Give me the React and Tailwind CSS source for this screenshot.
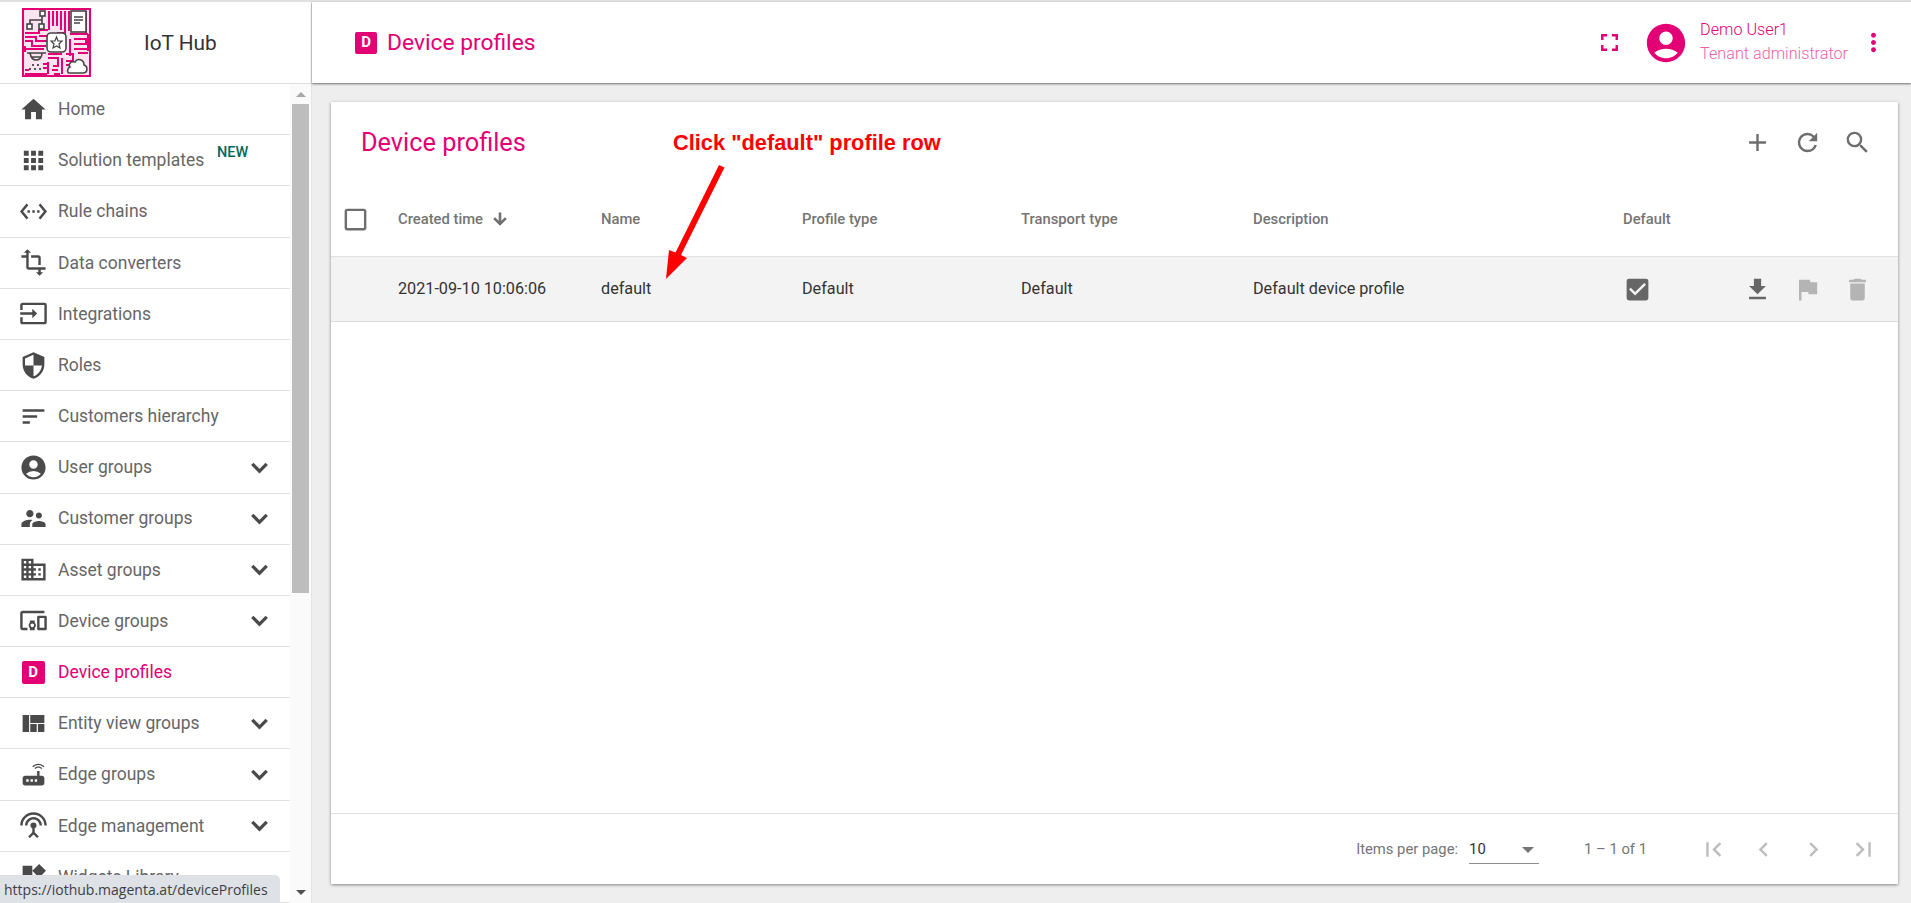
import {
  MdHome, MdApps, MdSettingsEthernet, MdTransform, MdInput, MdSecurity, MdSort, MdAccountCircle,
  MdSupervisorAccount, MdDomain, MdDevicesOther, MdViewQuilt, MdRouter, MdSettingsInputAntenna, MdWidgets,
  MdFullscreen, MdMoreVert, MdAdd, MdRefresh, MdSearch, MdFileDownload, MdFlag, MdDelete,
  MdCheckBox, MdCheckBoxOutlineBlank, MdFirstPage, MdLastPage, MdChevronLeft, MdChevronRight,
} from 'react-icons/md'

const menu = [
  { label: 'Home', icon: MdHome },
  { label: 'Solution templates', icon: MdApps, badge: true },
  { label: 'Rule chains', icon: MdSettingsEthernet },
  { label: 'Data converters', icon: MdTransform },
  { label: 'Integrations', icon: MdInput },
  { label: 'Roles', icon: MdSecurity },
  { label: 'Customers hierarchy', icon: MdSort },
  { label: 'User groups', icon: MdAccountCircle, more: true },
  { label: 'Customer groups', icon: MdSupervisorAccount, more: true },
  { label: 'Asset groups', icon: MdDomain, more: true },
  { label: 'Device groups', icon: MdDevicesOther, more: true },
  { label: 'Device profiles', active: true },
  { label: 'Entity view groups', icon: MdViewQuilt, more: true },
  { label: 'Edge groups', icon: MdRouter, more: true },
  { label: 'Edge management', icon: MdSettingsInputAntenna, more: true },
  { label: 'Widgets Library', icon: MdWidgets },
]

const columns = ['', 'Created time', 'Name', 'Profile type', 'Transport type', 'Description', 'Default']
const rowGrid = 'grid grid-cols-[67px_203px_201px_219px_232px_370px_1fr] items-center'

function Logo() {
  return (
    <svg width="69" height="69" viewBox="0 0 69 69" className="shrink-0">
      <rect width="69" height="69" fill="#fbe3f0" />
      <g fill="none" stroke="#e20074" strokeWidth="2">
        <rect x="1" y="1" width="67" height="67" strokeWidth="2" />
        <path d="M27 3v19M31 3v15M35 3v15M39 3v19M43 3v22h-8M47 3v20" />
        <path d="M3 25h14v-3h9M3 29h11v4h9M3 33h7v5h14M17 28h9v5h-4M3 38v6" />
        <path d="M2 41h20M64 3v22M48 26h18M52 31h12v5H52M52 41h14M56 45h10M48 31v17M66 26v17" />
        <path d="M26 46h14M26 50h10v8h-5M26 54v12M30 62h6M40 50v16M44 46h7v7h-7M44 57h6M32 66h6" />
        <path d="M3 66h22M3 62h4M21 56h4M21 60h4" />
      </g>
      <g fill="#fff" stroke="#444" strokeWidth="1.600">
        <rect x="18" y="3" width="5" height="5" />
        <rect x="5" y="16" width="5" height="5" />
        <rect x="17" y="16" width="5" height="5" />
        <rect x="49" y="3" width="15" height="21" />
        <rect x="25" y="25" width="19" height="19" rx="4" />
        <path d="M47 65h14c5 0 5-7 1-8 0-6-7-7-9-3-5-1-7 3-5 5-3 1-3 6-1 6z" />
      </g>
      <g fill="none" stroke="#444" strokeWidth="1.600">
        <path d="M20 8v4M8 16v-4h12v4" />
        <path d="M52 9h9M52 12h9M52 15h6" />
        <path d="M34.500 29l1.500 4h4l-3 3 1 4-3.500-2-3.500 2 1-4-3-3h4z" strokeWidth="1.200" />
        <path d="M5 45h19M8 45c1 5 3 7 6 7s6-2 6-7M9 49h10" />
      </g>
      <g fill="#555">
        <rect x="10" y="56" width="2" height="2" /><rect x="15" y="56" width="2" height="2" />
        <rect x="7" y="60" width="2" height="2" /><rect x="12" y="60" width="2" height="2" /><rect x="17" y="60" width="2" height="2" />
      </g>
    </svg>
  )
}

function Chevron() {
  return (
    <svg width="29" height="29" viewBox="0 0 24 24" fill="none" stroke="#4a4a4a" strokeWidth="2.700" className="shrink-0">
      <path d="M6 9l6 6 6-6" />
    </svg>
  )
}

function SortArrow() {
  return (
    <svg width="18" height="18" viewBox="0 0 24 24" fill="#6e6e6e" stroke="#6e6e6e" strokeWidth="1.500" className="shrink-0">
      <path d="M20 12l-1.410-1.410L13 16.170V4h-2v12.170l-5.580-5.590L4 12l8 8 8-8z" />
    </svg>
  )
}

function DBadge({ className }) {
  return (
    <span className={`flex items-center justify-center rounded-[2px] bg-[#e20074] font-bold text-white ${className}`}>D</span>
  )
}

function Sidebar() {
  return (
    <aside className="relative flex w-[312px] shrink-0 flex-col border-r border-[#e4e4e4] bg-white">
      <div className="flex h-[82px] shrink-0 items-center border-b border-[#dedede] pl-[22px]">
        <Logo />
        <span className="ml-[53px] pt-[2px] text-[20.800px] text-[#333]">IoT Hub</span>
      </div>
      <div className="flex min-h-0 flex-1">
        <nav className="w-[290px] shrink-0 overflow-hidden">
          {menu.map(item => {
            const Icon = item.icon
            return (
              <div key={item.label} className="relative flex h-[51.2px] items-center border-b border-[#e0e0e0] pl-[18px] pr-[16px]">
                <span className="flex w-[30px] justify-center">
                  {item.active
                    ? <DBadge className="h-[23px] w-[23px] text-[15px]" />
                    : <Icon size={29} className="text-[#4a4a4a]" />}
                </span>
                <span className={`ml-[10px] flex-1 text-[17.500px] ${item.active ? 'text-[#e20074]' : 'text-[#666]'}`}>{item.label}</span>
                {item.badge && <span className="absolute left-[217px] top-[7px] text-[14.500px] font-medium text-[#00695c]">NEW</span>}
                {item.more && <Chevron />}
              </div>
            )
          })}
        </nav>
        {/* scrollbar */}
        <div className="flex w-[21px] flex-col items-start bg-[#fafafa] pl-[2px]">
          <div className="flex h-[20px] w-[17px] items-center justify-center">
            <span className="h-0 w-0 border-x-[5px] border-b-[5px] border-x-transparent border-b-[#a8a8a8]" />
          </div>
          <div className="h-[489px] w-[17px] bg-[#bdbdbd]" />
          <div className="flex-1" />
          <div className="flex h-[21px] w-[17px] items-center justify-center">
            <span className="h-0 w-0 border-x-[5px] border-t-[5px] border-x-transparent border-t-[#505050]" />
          </div>
        </div>
      </div>
      <div className="absolute bottom-0 left-0 flex h-[28px] w-[280px] items-center rounded-tr-[5px] bg-[#dee1e6] pl-[4px] font-['Open_Sans',sans-serif] text-[14px] text-[#3c4043]">
        https://iothub.magenta.at/deviceProfiles
      </div>
    </aside>
  )
}

function Topbar() {
  return (
    <header className="z-10 flex h-[81px] shrink-0 items-center bg-white pl-[43px] pr-[23px] shadow-[0_1px_2px_rgba(0,0,0,0.55)]">
      <DBadge className="h-[22px] w-[22px] text-[15px]" />
      <span className="ml-[10px] pt-[2px] text-[22.800px] text-[#e20074]">Device profiles</span>
      <div className="flex-1" />
      <MdFullscreen size={29} className="text-[#e20074]" />
      <MdAccountCircle size={46} className="ml-[19px] text-[#e20074]" />
      <div className="ml-[11px] flex flex-col pb-[2px] text-[16.200px] font-light leading-[24px]">
        <span className="text-[#e20074]">Demo User1</span>
        <span className="text-[#ef5fa8]">Tenant administrator</span>
      </div>
      <MdMoreVert size={29} className="ml-[11px] text-[#e20074]" />
    </header>
  )
}

function ProfilesCard() {
  return (
    <section className="relative flex flex-1 flex-col bg-white shadow-[0_1px_3px_rgba(0,0,0,0.45)]">
      <div className="flex h-[80px] shrink-0 items-center pl-[30px] pr-[26px]">
        <h1 className="flex-1 pt-[1px] text-[25.300px] font-normal text-[#e20074]">Device profiles</h1>
        <div className="flex items-center gap-[21px] text-[#6e6e6e]">
          <MdAdd size={29} />
          <MdRefresh size={29} />
          <MdSearch size={29} />
        </div>
      </div>

      <div className={`${rowGrid} h-[75px] shrink-0 border-b border-[#e0e0e0] text-[14.800px] font-medium text-[#757575]`}>
        {columns.map((col, i) => (
          i === 0
            ? <span key="select" className="flex pl-[10px]"><MdCheckBoxOutlineBlank size={29} className="text-[#6e6e6e]" /></span>
            : <span key={col} className="flex items-center gap-[8px]">
                {col}
                {i === 1 && <SortArrow />}
              </span>
        ))}
      </div>

      <div className={`${rowGrid} h-[65px] shrink-0 border-b border-[#dcdcdc] bg-[#f3f3f3] text-[16.200px] text-[#333]`}>
        <span />
        <span className="pt-[1px]">2021-09-10 10:06:06</span>
        <span className="pt-[1px]">default</span>
        <span className="pt-[1px]">Default</span>
        <span className="pt-[1px]">Default</span>
        <span className="pt-[1px]">Default device profile</span>
        <div className="relative flex items-center">
          <MdCheckBox size={29} className="text-[#666]" />
          <div className="absolute left-[120px] flex items-center gap-[21px]">
            <MdFileDownload size={29} className="text-[#666]" />
            <MdFlag size={29} className="text-[#b4b4b4]" />
            <MdDelete size={29} className="text-[#b4b4b4]" />
          </div>
        </div>
      </div>

      <div className="flex-1" />

      <footer className="flex h-[71px] shrink-0 items-center justify-end border-t border-[#e0e0e0] pr-[20px] text-[14.800px] text-[#757575]">
        <span className="pt-[1px]">Items per page:</span>
        <div className="ml-[11px] flex h-[30px] w-[70px] items-center justify-between border-b border-[#8c8c8c] pt-[2px] text-[#333]">
          <span>10</span>
          <span className="mr-[5px] h-0 w-0 border-x-[6px] border-t-[6px] border-x-transparent border-t-[#757575]" />
        </div>
        <span className="ml-[45px] mr-[52px] pt-[1px]">1 – 1 of 1</span>
        <div className="flex items-center gap-[21px] text-[#bdbdbd]">
          <MdFirstPage size={29} />
          <MdChevronLeft size={29} />
          <MdChevronRight size={29} />
          <MdLastPage size={29} />
        </div>
      </footer>

      {/* annotation on top of the screenshot */}
      <span className="absolute left-[342px] top-[25px] font-['Liberation_Sans',sans-serif] text-[21.800px] font-bold text-[#ff0000]">
        Click "default" profile row
      </span>
      <svg className="absolute left-[330px] top-[60px]" width="70" height="125" viewBox="0 0 70 125">
        <path d="M58 3L63.500 5.500 20 93l6 3L5 117l3-29 6.500 2.500z" fill="#ff0000" />
      </svg>
    </section>
  )
}

export default function App() {
  return (
    <div className="flex h-screen w-full flex-col overflow-hidden bg-[#eeeeee] font-['Roboto',sans-serif]">
      <div className="h-[2px] shrink-0 bg-[#e0e0e0]" />
      <div className="flex min-h-0 flex-1">
        <Sidebar />
        <main className="flex min-w-0 flex-1 flex-col">
          <Topbar />
          <div className="flex min-h-0 flex-1 pb-[19px] pl-[19px] pr-[13px] pt-[19px]">
            <ProfilesCard />
          </div>
        </main>
      </div>
    </div>
  )
}
